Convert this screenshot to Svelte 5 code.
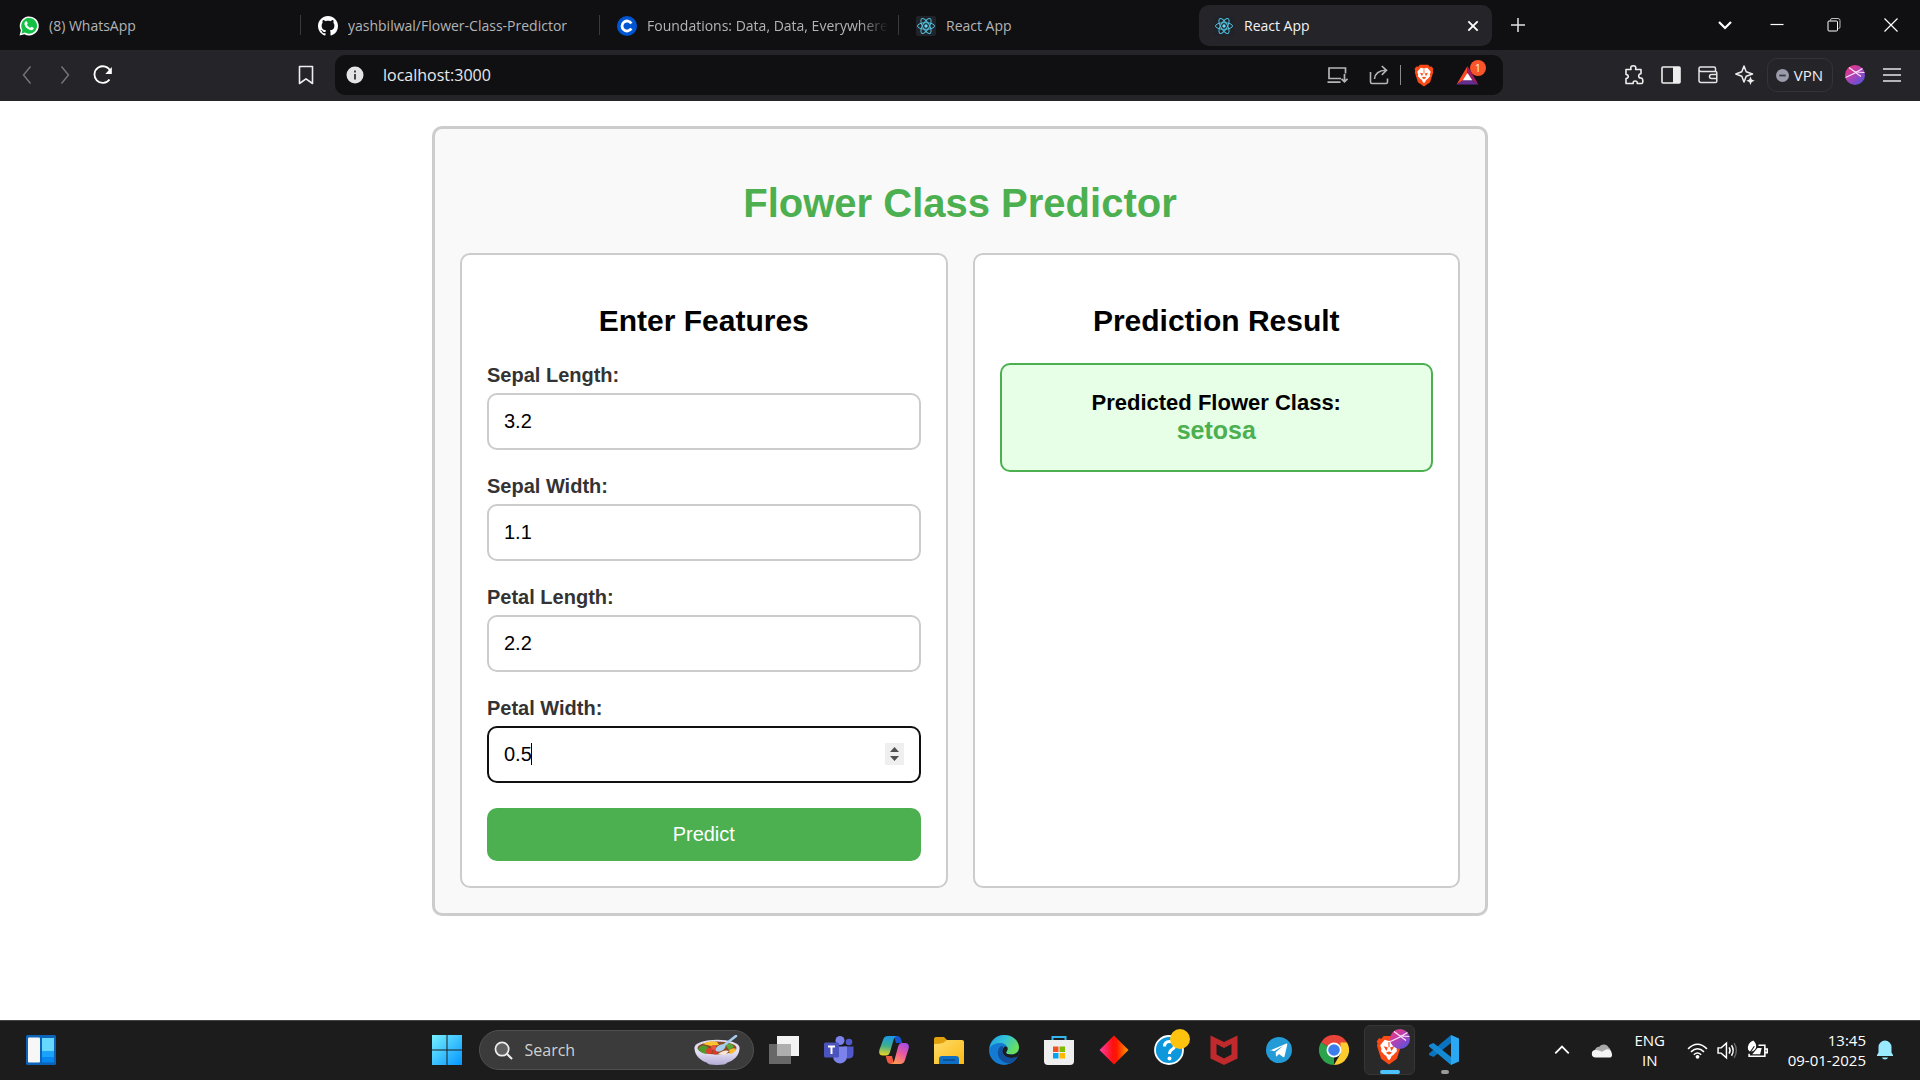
<script lang="ts">
  type Field = { id: string; label: string; value: number };

  const tabs = [
    { title: '(8) WhatsApp', icon: 'whatsapp' },
    { title: 'yashbilwal/Flower-Class-Predictor', icon: 'github' },
    { title: 'Foundations: Data, Data, Everywhere', icon: 'coursera' },
    { title: 'React App', icon: 'react' },
    { title: 'React App', icon: 'react', active: true },
  ];

  let fields: Field[] = $state([
    { id: 'sepal-length', label: 'Sepal Length:', value: 3.2 },
    { id: 'sepal-width', label: 'Sepal Width:', value: 1.1 },
    { id: 'petal-length', label: 'Petal Length:', value: 2.2 },
    { id: 'petal-width', label: 'Petal Width:', value: 0.5 },
  ]);

  const prediction = 'setosa';

  function submit(event: SubmitEvent) {
    event.preventDefault();
  }
</script>

{#snippet brave(cls: string)}
  <svg class={cls} viewBox="0 0 24 28">
    <path d="M7 1h10l2 2.400 2.400-.4L23.500 6l-.8 2 .5 2-3.800 12.200L12 27.500 4.600 22.200.8 10l.5-2-.8-2 2.100-3 2.400.4z" fill="#fb4a16" />
    <path d="M12 5.500l4-1 4.200 5-1.200 3.500 .5 2-3.500 3.600-1.500 1-1 2.400L12 23.500 10.500 22l-1-2.400-1.500-1L4.500 15l.5-2L3.800 9.500 8 4.500z" fill="#fff" />
    <path d="M7 10.500l4 1.200-1.400 3.300zM17 10.500l-4 1.200 1.400 3.300zM9 16.500l3-1 3 1-3 2zM11.500 6.500h1v5h-1z" fill="#fb4a16" />
  </svg>
{/snippet}

{#snippet orb(cls: string)}
  <svg class={cls} viewBox="0 0 20 20">
    <defs>
      <linearGradient id="orb-{cls}" x1="0.1" y1="0" x2="0.9" y2="1">
        <stop offset="0.2" stop-color="#d83a92" />
        <stop offset="0.55" stop-color="#a345bd" />
        <stop offset="1" stop-color="#4a55e0" />
      </linearGradient>
    </defs>
    <circle cx="10" cy="10" r="10" fill="url(#orb-{cls})" />
    <path d="M.5 12.500Q9 9 17.500 3.500M4 2.500L16 11.500M9 6.500Q14 7.500 19.500 7.500" fill="none" stroke="#fbe4fa" stroke-width="1.200" />
  </svg>
{/snippet}

{#snippet favicon(name: string)}
  {#if name === 'whatsapp'}
    <svg class="fav" viewBox="0 0 20 20">
      <path d="M.5 19.500l1.400-5A9.500 9.500 0 1 1 5.500 18.200z" fill="#fff" />
      <path d="M2.500 17.500l.9-3.500A7.900 7.900 0 1 1 6 16.600z" fill="#12c143" />
      <path d="M6.800 5.300c.6-.3 1-.1 1.200.4l.7 1.600c.1.500-.8 1.200-.7 1.500.7 1.500 1.700 2.400 3.200 3 .4.100 1-1.100 1.400-1l1.800.9c.5.300.2 1.200-.1 1.600-1.100 1.300-2.700 1.100-4.300.3C7.800 12.500 6 10.500 5.500 8.500c-.3-1.300.3-2.500 1.300-3.200z" fill="#fff" />
    </svg>
  {:else if name === 'github'}
    <svg class="fav" viewBox="0 0 16 16">
      <path fill="#fff" d="M8 0C3.580 0 0 3.580 0 8c0 3.540 2.290 6.530 5.470 7.590.4.070.55-.17.55-.38 0-.19-.01-.82-.01-1.490-2.010.37-2.530-.49-2.690-.94-.09-.23-.48-.94-.82-1.130-.28-.15-.68-.52-.01-.53.63-.01 1.080.58 1.230.82.72 1.210 1.870.87 2.330.66.07-.52.28-.87.51-1.070-1.780-.2-3.640-.89-3.640-3.950 0-.87.31-1.590.82-2.150-.08-.2-.36-1.020.08-2.120 0 0 .67-.21 2.200.82.64-.18 1.320-.27 2-.27s1.360.09 2 .27c1.530-1.040 2.200-.82 2.200-.82.44 1.100.16 1.920.08 2.120.51.56.82 1.270.82 2.150 0 3.070-1.870 3.750-3.650 3.950.29.25.54.73.54 1.480 0 1.070-.01 1.930-.01 2.200 0 .21.15.46.55.38A8.010 8.010 0 0 0 16 8c0-4.420-3.580-8-8-8z" />
    </svg>
  {:else if name === 'coursera'}
    <svg class="fav" viewBox="0 0 20 20">
      <circle cx="10" cy="10" r="10" fill="#0056d2" />
      <path d="M14.300 7.400A5 5 0 1 0 14.300 12.600" fill="none" stroke="#fff" stroke-width="2.800" />
    </svg>
  {:else}
    <svg class="fav" viewBox="0 0 20 20">
      <rect width="20" height="20" rx="2" fill="#20232a" />
      <g fill="none" stroke="#53c1de" stroke-width="1">
        <ellipse cx="10" cy="10" rx="8.500" ry="3.300" />
        <ellipse cx="10" cy="10" rx="8.500" ry="3.300" transform="rotate(60 10 10)" />
        <ellipse cx="10" cy="10" rx="8.500" ry="3.300" transform="rotate(120 10 10)" />
      </g>
      <circle cx="10" cy="10" r="1.700" fill="#61dafb" />
    </svg>
  {/if}
{/snippet}

<div class="screen">
  <header class="browser">
    <div class="tabstrip">
      <div class="tabs" role="tablist">
        {#each tabs as tab, i}
          <div class="tab" class:active={tab.active} class:divided={i < 3}>
            <button class="tab-main" role="tab" aria-selected={!!tab.active}>
              {@render favicon(tab.icon)}
              <span class="tab-title" class:faded={i === 2}>{tab.title}</span>
            </button>
            {#if tab.active}
              <button class="tab-close" aria-label="Close tab">
                <svg viewBox="0 0 12 12"><path d="M2 2l8 8M10 2l-8 8" stroke="#fff" stroke-width="1.600" /></svg>
              </button>
            {/if}
          </div>
        {/each}
        <button class="new-tab" aria-label="New tab">
          <svg viewBox="0 0 14 14"><path d="M7 0v14M0 7h14" stroke="#e2e2e4" stroke-width="1.500" /></svg>
        </button>
      </div>
      <div class="window-controls">
        <button aria-label="Search tabs"><svg viewBox="0 0 16 16"><path d="M2 5l6 6 6-6" fill="none" stroke="#fff" stroke-width="2.200" /></svg></button>
        <button aria-label="Minimize"><svg viewBox="0 0 16 16"><path d="M1.500 7.500h13" stroke="#fff" stroke-width="1.200" /></svg></button>
        <button aria-label="Restore"><svg viewBox="0 0 16 16"><path d="M4.500 3.500V3a1.500 1.500 0 0 1 1.500-1.500h6A2 2 0 0 1 14 3.500v6.500a1.500 1.500 0 0 1-1.500 1.500" fill="none" stroke="#bbb" /><rect x="2" y="4" width="9.500" height="10" rx="1" fill="none" stroke="#fff" /></svg></button>
        <button aria-label="Close window"><svg viewBox="0 0 16 16"><path d="M1.500 1.500l13 13M14.500 1.500l-13 13" stroke="#fff" stroke-width="1.200" /></svg></button>
      </div>
    </div>

    <div class="toolbar">
      <div class="nav">
        <button aria-label="Back"><svg viewBox="0 0 20 20"><path d="M13.500 1.500L6.500 10l7 8.500" fill="none" stroke="#77767b" stroke-width="1.400" /></svg></button>
        <button aria-label="Forward"><svg viewBox="0 0 20 20"><path d="M6.500 1.500l7 8.500-7 8.500" fill="none" stroke="#77767b" stroke-width="1.400" /></svg></button>
        <button aria-label="Reload"><svg viewBox="0 0 20 20"><path d="M16.500 14.500A8.300 8.300 0 1 1 17.500 6.500" fill="none" stroke="#fff" stroke-width="1.800" /><path d="M18.800 2v7h-6.500z" fill="#fff" /></svg></button>
      </div>
      <button class="bookmark" aria-label="Bookmark"><svg viewBox="0 0 20 20"><path d="M3.500 1.500h13v17L10 13.800l-6.500 4.700z" fill="none" stroke="#eee" stroke-width="1.600" stroke-linejoin="round" /></svg></button>
      <div class="address">
        <button class="site-info" aria-label="Site information"><svg viewBox="0 0 18 18"><circle cx="9" cy="9" r="8.500" fill="#e4e3e8" /><path d="M9 8v5.500M9 4.500v2" stroke="#333" stroke-width="1.800" /></svg></button>
        <input class="url" type="text" aria-label="Address" value="localhost:3000" />
        <button class="act install" aria-label="Install app"><svg viewBox="0 0 22 20"><path d="M15 13.500H3V3h16.500v5.500M1.500 17.200h13M18.500 9v7.500M15.500 13.800l3 3 3-3" fill="none" stroke="#b5b5b8" stroke-width="1.700" /></svg></button>
        <button class="act" aria-label="Share"><svg viewBox="0 0 20 20"><path d="M1.500 7v10q0 1.500 1.500 1.500h14q1.500 0 1.500-1.500v-3.500M5.500 14C6 8.500 9.500 5.500 17 5.300M12.800 1L17.500 5.300l-4.700 4.500" fill="none" stroke="#b5b5b8" stroke-width="1.600" /></svg></button>
        <span class="rule"></span>
        <button class="act brave-btn" aria-label="Brave Shields">{@render brave('brave-small')}</button>
        <button class="act rewards" aria-label="Brave Rewards">
          <svg viewBox="0 0 24 22"><path d="M12 1L.5 20.500 12 13z" fill="#ff4724" /><path d="M12 1l11.500 19.500L12 13z" fill="#9e1f63" /><path d="M.5 20.500h23L12 13z" fill="#662d91" /><path d="M12 8.500l5 7.500H7z" fill="#fff" /></svg>
          <span class="badge">1</span>
        </button>
      </div>
      <div class="extras">
        <button aria-label="Extensions"><svg viewBox="0 0 20 20"><path d="M2 4.500h5C6 1 8 .8 9.300.8s3.300.2 2.300 3.700H17v4.300c-1.800 0-2.300 1-2.300 2.100S15.200 13 17 13c2.500 0 2 5.500 1 5.500h-4.800c.3-2-.7-2.500-2-2.500s-2.300.5-2 2.500H2v-5c2-.3 2.300-1 2.300-2S4 9.700 2 9.500z" fill="none" stroke="#eee" stroke-width="1.600" stroke-linejoin="round" /></svg></button>
        <button aria-label="Side panel"><svg viewBox="0 0 20 20"><rect x="1" y="2" width="18" height="16" rx="1" fill="none" stroke="#eee" stroke-width="1.600" /><path d="M12 2h7v16h-7z" fill="#eee" /></svg></button>
        <button aria-label="Wallet"><svg viewBox="0 0 20 20"><path d="M17.500 6.500V3.500q0-1.500-1.500-1.500H2.500Q1 2 1 3.500v12q0 2 2 2h14.500q1.300 0 1.300-1.300V8q0-1.500-1.300-1.500H3Q1 6.500 1 4.500M19 9.500h-5.500q-2 0-2 2t2 2H19" fill="none" stroke="#e5e5e7" stroke-width="1.500" /></svg></button>
        <button aria-label="Leo AI"><svg viewBox="0 0 20 20"><path d="M9 1l2.200 5.800L17.500 9l-6.300 2.200L9 17l-2.200-5.800L.8 9l6-2.200z" fill="none" stroke="#eee" stroke-width="1.500" stroke-linejoin="round" /><path d="M15.500 11.500l1.200 3 3 1.200-3 1.200-1.200 3-1.200-3-3-1.200 3-1.200z" fill="#eee" /></svg></button>
        <button class="vpn"><svg viewBox="0 0 12 12"><circle cx="6" cy="6" r="6" fill="#9a9bab" /><path d="M3 6h6" stroke="#3a3a42" stroke-width="1.600" /></svg>VPN</button>
        <button aria-label="Profile">{@render orb('orb-bar')}</button>
        <button aria-label="Menu"><svg viewBox="0 0 20 20"><path d="M1 4h18M1 10h18M1 16h18" stroke="#e6e6e8" stroke-width="1.500" /></svg></button>
      </div>
    </div>
  </header>

  <main class="page">
    <div class="container">
      <h1>Flower Class Predictor</h1>
      <div class="columns">
        <section class="card">
          <h2>Enter Features</h2>
          <form onsubmit={submit}>
            {#each fields as field, i (field.id)}
              <div class="field">
                <label for={field.id}>{field.label}</label>
                <div class="control" class:focused={i === 3}>
                  <input id={field.id} type="number" step="0.1" bind:value={field.value} />
                  {#if i === 3}
                    <span class="caret"></span>
                    <span class="spinner">
                      <svg viewBox="0 0 19 22"><path d="M5 9l4.500-5L14 9zM5 13l4.500 5 4.500-5z" fill="#505050" /></svg>
                    </span>
                  {/if}
                </div>
              </div>
            {/each}
            <button class="predict" type="submit">Predict</button>
          </form>
        </section>
        <section class="card">
          <h2>Prediction Result</h2>
          <div class="result">
            <h3>Predicted Flower Class:</h3>
            <p>{prediction}</p>
          </div>
        </section>
      </div>
    </div>
  </main>

  <footer class="taskbar">
    <div class="task-left">
      <button class="widgets" aria-label="Widgets">
        <svg class="ico" viewBox="0 0 30 30"><rect width="30" height="30" rx="1.500" fill="#0b64b8" /><rect x="2" y="2.500" width="12" height="25" rx="1" fill="#f7f7f7" /><path d="M16 3h12v13H16z" fill="#66d7ff" /><path d="M16 16h12v6H16z" fill="#1ba2fa" /><path d="M16 22h12v5.500H16z" fill="#0786ee" /></svg>
      </button>
    </div>

    <div class="task-center">
      <button class="cell" aria-label="Start">
        <svg class="ico" viewBox="0 0 30 30">
          <defs><linearGradient id="win" x1="0" y1="0" x2="1" y2="1"><stop offset="0" stop-color="#75f0ff" /><stop offset="1" stop-color="#0595ff" /></linearGradient></defs>
          <path d="M0 0h14.500v14.500H0zM15.500 0H30v14.500H15.500zM0 15.500h14.500V30H0zM15.500 15.500H30V30H15.500z" fill="url(#win)" />
        </svg>
      </button>
      <label class="search">
        <svg class="lens" viewBox="0 0 20 20"><circle cx="8.500" cy="8.500" r="7" fill="#606060" stroke="#eee" stroke-width="1.800" /><path d="M13.500 13.500l5.500 5.500" stroke="#eee" stroke-width="2.200" /></svg>
        <input type="text" placeholder="Search" aria-label="Search" />
        <svg class="bowl" viewBox="0 0 46 30">
          <defs><linearGradient id="dish" x1="0" y1="0" x2="0" y2="1"><stop offset="0" stop-color="#f4f1ff" /><stop offset="1" stop-color="#b4abd6" /></linearGradient></defs>
          <path d="M.5 13c0 8 7 13 12 14.500Q14 30 23 30t10.500-2.500C39 26 45.500 21 45.500 13z" fill="url(#dish)" />
          <ellipse cx="23" cy="12.500" rx="22.500" ry="7.800" fill="#e0dcf3" />
          <ellipse cx="23" cy="13" rx="19.500" ry="6.500" fill="#8c4a22" />
          <path d="M4 14q3-5 8-3l5 4-5 4q-6-1-8-5z" fill="#4e9b2e" />
          <path d="M9 9q6-4 14-2l2 3-8 1z" fill="#fdc52d" />
          <path d="M31 9q7-2 9 3l-5 3z" fill="#5aa637" />
          <circle cx="15" cy="16" r="3" fill="#e33b2e" /><circle cx="19.500" cy="12.500" r="2.500" fill="#ef5340" /><circle cx="21" cy="17" r="2.500" fill="#d93a2b" />
          <path d="M24 19q6-5 11-3l-4 4z" fill="#fae6d6" /><path d="M35 15q5-3 7-1-1 4-6 5z" fill="#f6bd33" />
          <ellipse cx="26.500" cy="13" rx="5.500" ry="3" fill="#a6cdf0" transform="rotate(-28 26.500 13)" />
          <path d="M29 11L42 1" stroke="#a6cdf0" stroke-width="2.500" stroke-linecap="round" />
        </svg>
      </label>
      <button class="cell" aria-label="Task view">
        <svg class="ico" viewBox="0 0 30 30"><path d="M8 1h22v20H8z" fill="#f3f3f3" /><path d="M0 9h22v20H0z" fill="#686868" /><path d="M8 9h14v12H8z" fill="#aeaeae" /></svg>
      </button>
      <button class="cell" aria-label="Teams">
        <svg class="ico" viewBox="0 0 30 30"><circle cx="16" cy="5.500" r="4.500" fill="#7b83eb" /><circle cx="25" cy="7" r="3.300" fill="#5059c9" /><path d="M20 11.500h9.500v7q0 5-5 5H20z" fill="#5059c9" /><path d="M9 11.500h14v9q0 7.500-7 8-7-.5-7-8z" fill="#7b83eb" /><rect y="7.500" width="15" height="15" rx="1.500" fill="#4b53bc" /><path d="M4 11.500h7M7.500 11.500V19" stroke="#fff" stroke-width="2" /></svg>
      </button>
      <button class="cell" aria-label="Copilot">
        <svg class="ico" viewBox="0 0 30 30">
          <defs>
            <linearGradient id="cpa" x1="0.3" y1="0" x2="0.2" y2="1"><stop offset="0" stop-color="#1a9ae8" /><stop offset="0.5" stop-color="#3fae8c" /><stop offset="1" stop-color="#f0d424" /></linearGradient>
            <linearGradient id="cpb" x1="0.8" y1="0" x2="0.3" y2="1"><stop offset="0" stop-color="#a24be8" /><stop offset="0.5" stop-color="#ee5a9b" /><stop offset="1" stop-color="#ff9a53" /></linearGradient>
          </defs>
          <path d="M15 1h3q3 0 4 3l1.200 4H17z" fill="#1553cf" />
          <path d="M15 29h-3q-3 0-4-3l-1.200-5H13z" fill="#f0583f" />
          <path d="M9 1h9q-2.500.5-3.500 4L11 17q-1 3.500-4 3.500H4q-5 0-3.500-6L4 5q1-4 5-4z" fill="url(#cpa)" />
          <path d="M21 29h-9q2.500-.5 3.500-4L19 12q1-4 4-4h3q5 0 3.500 6L26 25q-1 4-5 4z" fill="url(#cpb)" />
        </svg>
      </button>
      <button class="cell" aria-label="File Explorer">
        <svg class="ico" viewBox="0 0 30 30"><defs><linearGradient id="fold" x1="0" y1="0" x2="1" y2="1"><stop offset="0" stop-color="#ffdc6b" /><stop offset="1" stop-color="#fbb913" /></linearGradient></defs><path d="M0 4q0-2 2-2h8l4 4h14q2 0 2 2v6H0z" fill="#e1a00e" /><path d="M0 9q6 0 9-1l4-3h15q2 0 2 2v22H0z" fill="url(#fold)" /><path d="M5 29v-5q0-3 3-3h14q3 0 3 3v5z" fill="#0f6fc4" /><path d="M9 25h12" stroke="#0a4a8d" stroke-width="1.500" /></svg>
      </button>
      <button class="cell" aria-label="Edge">
        <svg class="ico" viewBox="0 0 30 30">
          <defs><linearGradient id="edg" x1="0" y1="0" x2="1" y2="0.500"><stop offset="0" stop-color="#1d9be0" /><stop offset="0.500" stop-color="#33c3d8" /><stop offset="1" stop-color="#6be05a" /></linearGradient></defs>
          <circle cx="15" cy="15" r="15" fill="#137bd2" />
          <path d="M.5 13C2 5 8 0 15 0c9 0 15 6 15 12.500 0 5-4 7-8 7-3 0-5-1-5-2 0-.7 1.500-1.500 1.500-4 0-3-3-5.500-7-5.500-5 0-9 2-11 5z" fill="url(#edg)" />
          <path d="M12 11c-4 3-4 9-1 13s9 6 13 3c2-1 4-4 4.500-5.500-6 3-14 1-15-5-.3-2 0-4 1-5z" fill="#124f9c" />
          <path d="M17 17.500c0 1 2 2 5 2 4 0 8-2 8-6.500 0 4 0 6-1.500 8.500-6 3-14 1-15-5-.2-2 1-5 3-5 2.500 0 3 3 .5 6z" fill="#1c1c1c" />
        </svg>
      </button>
      <button class="cell" aria-label="Microsoft Store">
        <svg class="ico" viewBox="0 0 30 30"><path d="M8.500 7V2h13v5" fill="none" stroke="#35b6ee" stroke-width="2" /><path d="M0 5h30v21q0 4-4 4H4q-4 0-4-4z" fill="#efefef" /><path d="M9 11.500h5.500V17H9z" fill="#f25022" /><path d="M15.500 11.500H21V17h-5.500z" fill="#7fba00" /><path d="M9 18h5.500v5.500H9z" fill="#00a4ef" /><path d="M15.500 18H21v5.500h-5.500z" fill="#ffb900" /></svg>
      </button>
      <button class="cell" aria-label="Power app">
        <svg class="ico" viewBox="0 0 30 30"><defs><linearGradient id="dia"><stop offset="0" stop-color="#ff3fa8" /><stop offset="0.450" stop-color="#ff1010" /><stop offset="0.600" stop-color="#ff1a00" /><stop offset="1" stop-color="#ff9f00" /></linearGradient></defs><path d="M15 .5L29.500 15 15 29.500.5 15z" fill="url(#dia)" /></svg>
      </button>
      <button class="cell" aria-label="Get Help">
        <svg class="ico over" viewBox="0 0 36 36"><circle cx="15" cy="21" r="14" fill="#0d97dc" stroke="#fff" stroke-width="1.800" /><path d="M10.500 17.500q0-5 5-5t5 4.500q0 2-2.500 3.500-2.500 1.500-2.500 4.500" fill="none" stroke="#fff" stroke-width="3" /><circle cx="15.500" cy="29.500" r="2" fill="#fff" /><circle cx="26" cy="10" r="10" fill="#ffc20e" /></svg>
      </button>
      <button class="cell" aria-label="McAfee">
        <svg class="ico" viewBox="0 0 30 30"><path d="M1.500.5L15 7 28.500.5v23L15 30 1.500 23.500z" fill="#c12a2c" /><path d="M7.500 9L15 13l7.500-4v10.500L15 23.500l-7.500-4z" fill="#1c1c1c" /></svg>
      </button>
      <button class="cell" aria-label="Telegram">
        <svg class="ico" viewBox="0 0 30 30"><circle cx="15" cy="15" r="13" fill="#229bd6" /><path d="M6 15.500L22.500 8.500q1-.3.800 1L20.500 21.500q-.4 1.200-1.500.5l-4-3-2.200 2.200q-.8.600-.9-.5l-.2-3.500 7.500-6.500-9 5.500-4-1.200q-1-.3-.2-.5z" fill="#fff" /></svg>
      </button>
      <button class="cell" aria-label="Chrome">
        <svg class="ico" viewBox="0 0 30 30"><path d="M15 15L2 7.500A15 15 0 0 1 28 7.500z" fill="#e8443a" /><path d="M15 15L2 7.500A15 15 0 0 0 15 30z" fill="#2ba24c" /><path d="M28 7.500A15 15 0 0 1 15 30l6.500-11.200V7.500z" fill="#fccc2e" /><circle cx="15" cy="15" r="7.500" fill="#fff" /><circle cx="15" cy="15" r="5.800" fill="#3b7ded" /></svg>
      </button>
      <button class="cell running" aria-label="Brave">
        {@render brave('brave-task')}
        {@render orb('orb-task')}
        <span class="marker"></span>
      </button>
      <button class="cell" aria-label="Visual Studio Code">
        <svg class="ico" viewBox="0 0 30 30"><path d="M22 0v8L4.500 22 0 20v-1.500z" fill="#0b74c0" /><path d="M22 30v-8L4.500 8 0 10v1.500z" fill="#158ad4" /><path d="M22 0l8 3.500v23L22 30z" fill="#2aa8f2" /></svg>
        <span class="marker idle"></span>
      </button>
    </div>

    <div class="tray">
      <button class="t-chev" aria-label="Show hidden icons"><svg viewBox="0 0 16 16"><path d="M2 11l6-6 6 6" fill="none" stroke="#fff" stroke-width="1.600" /></svg></button>
      <button class="t-cloud" aria-label="OneDrive"><svg viewBox="0 0 20 14"><path d="M3 8a4.500 4.500 0 0 1 4.500-4.500A5 5 0 0 1 16 4q2 1 2 4z" fill="#a8a8a8" /><path d="M4 13.500a3.500 3.500 0 0 1 0-7q2-.3 3 .5l3 1 4-2q4-.5 5 3 1.500 4.500-2.500 4.500z" fill="#f4f4f4" /></svg></button>
      <button class="lang"><span>ENG</span><span>IN</span></button>
      <button class="status" aria-label="Network, volume, battery">
        <svg class="wifi" viewBox="0 0 20 20"><path d="M1 8.500Q10-.5 19 8.500M3.800 11.300q6.200-6 12.400 0M6.500 14q3.500-3.300 7 0" fill="none" stroke="#fff" stroke-width="1.500" /><circle cx="10" cy="16" r="1.800" fill="#fff" /></svg>
        <svg class="vol" viewBox="0 0 20 20"><path d="M1 7.500h3L9 3v14l-5-4.500H1z" fill="none" stroke="#fff" stroke-width="1.400" /><path d="M11.500 7q2 3 0 6M13.800 5q3.200 5 0 10" fill="none" stroke="#fff" stroke-width="1.400" /><path d="M16.300 3q4.200 7 0 14" fill="none" stroke="#666" stroke-width="1.400" /></svg>
        <svg class="batt" viewBox="0 0 20 20"><path d="M11 5h6v10.500H2V13M17.500 8.500H19.300v3.500h-1.800" fill="none" stroke="#fff" stroke-width="1.500" /><path d="M1 9Q0 3 6 .5q3.500 3 2.500 7Q7 11 2.500 11zM10 7.500h4L12.500 13.500H5z" fill="#fff" /><path d="M2.500 12.500L7 6" stroke="#1c1c1c" stroke-width="1" /></svg>
      </button>
      <button class="clock"><span>13:45</span><span>09-01-2025</span></button>
      <button class="t-bell" aria-label="Notifications"><svg viewBox="0 0 18 20"><path d="M1 15l1.500-2.500V7a6.500 6.500 0 0 1 13 0v5.500L17 15v1H1zM6 17.500h6q-.5 2-3 2t-3-2z" fill="#99e9ff" /></svg></button>
    </div>
  </footer>
</div>

<style>
  :global(body) { margin: 0; background: #fff; }

  .screen {
    min-height: 100vh;
    display: flex;
    flex-direction: column;
    font-family: "Open Sans", "Noto Sans", sans-serif;
  }

  button {
    margin: 0;
    padding: 0;
    border: 0;
    background: none;
    color: inherit;
    font: inherit;
  }
  svg { display: block; flex: none; }

  /* Browser frame */
  .tabstrip {
    display: flex;
    justify-content: space-between;
    height: 50px;
    background: #101012;
  }
  .tabs { display: flex; flex: 0 1 1550px; min-width: 0; }
  .tab {
    display: flex;
    align-items: center;
    flex: 0 1 299px;
    min-width: 0;
    margin: 5px 0 4px;
    padding: 0 8px 0 19px;
    box-sizing: border-box;
    color: #b4b4b6;
    position: relative;
  }
  .tab.divided::after {
    content: "";
    position: absolute;
    right: -2px;
    top: 10px;
    width: 1px;
    height: 20px;
    background: #3a3a3d;
  }
  .tab.active {
    flex-basis: 293px;
    margin-left: 3px;
    margin-right: 3px;
    padding: 0 12px 0 15px;
    border-radius: 10px;
    background: #252429;
    color: #f2f2f3;
  }
  .tab-main {
    display: flex;
    align-items: center;
    gap: 10px;
    flex: 1;
    min-width: 0;
    font-size: 14px;
    line-height: 20px;
    text-align: left;
  }
  .fav { width: 20px; height: 20px; }
  .tab-title { overflow: hidden; white-space: nowrap; }
  .tab-title.faded { mask-image: linear-gradient(90deg, #000 88%, transparent); }
  .tab-close svg { width: 14px; height: 14px; }
  .new-tab { width: 46px; display: grid; place-items: center; }
  .new-tab svg { width: 14px; height: 14px; }
  .window-controls { display: flex; padding-right: 1px; }
  .window-controls button { width: 57px; display: grid; place-items: center; }
  .window-controls button:first-child { width: 46px; }
  .window-controls svg { width: 16px; height: 16px; }

  .toolbar {
    display: flex;
    align-items: center;
    height: 51px;
    padding-bottom: 1px;
    box-sizing: border-box;
    background: #252429;
  }
  .nav { display: flex; flex: 0 0 287px; padding-left: 8px; box-sizing: border-box; }
  .nav button { width: 38px; display: grid; place-items: center; }
  .nav svg, .bookmark svg { width: 20px; height: 20px; }
  .bookmark { width: 38px; display: grid; place-items: center; margin-right: 10px; }
  .address {
    flex: 1;
    display: flex;
    align-items: center;
    height: 40px;
    border-radius: 10px;
    background: #101012;
    padding: 0 15px 0 11px;
  }
  .site-info svg { width: 18px; height: 18px; }
  .url {
    flex: 1;
    min-width: 0;
    margin-left: 19px;
    padding: 0;
    border: 0;
    outline: 0;
    background: none;
    color: #e9e9eb;
    font: 16px/24px "Open Sans", "Noto Sans", sans-serif;
  }
  .act { width: 42px; display: grid; place-items: center; position: relative; }
  .act svg { width: 20px; height: 20px; }
  .install svg { width: 22px; }
  .rule { width: 1px; height: 20px; background: #8a8a8c; }
  .brave-btn { width: 47px; }
  .act :global(.brave-small) { width: 20px; height: 23px; }
  .rewards { width: 40px; }
  .rewards svg { width: 23px; height: 21px; }
  .badge {
    position: absolute;
    right: 2px;
    top: -5px;
    width: 16px;
    height: 16px;
    border-radius: 8px;
    background: #fb542b;
    color: #fff;
    font-size: 10px;
    line-height: 16px;
    text-align: center;
  }
  .extras { display: flex; align-items: center; margin: 0 10px 0 113px; }
  .extras button { width: 37px; display: grid; place-items: center; }
  .extras svg { width: 20px; height: 20px; }
  .extras .vpn {
    width: auto;
    display: flex;
    align-items: center;
    gap: 5px;
    margin: 0 3px;
    padding: 0 9px 0 8px;
    height: 34px;
    box-sizing: border-box;
    border: 1px solid #34333a;
    border-radius: 10px;
    color: #f0f0f2;
    font-size: 15px;
  }
  .extras .vpn svg { width: 13px; height: 13px; }

  /* Predictor page */
  .page {
    flex: 1;
    background: #fff;
    font-family: Arial, "Liberation Sans", sans-serif;
    padding: 25px;
  }
  .container {
    max-width: 1000px;
    margin: 0 auto;
    padding: 25px;
    border: 3px solid #ccc;
    border-radius: 10px;
    background: #f9f9f9;
  }
  h1 {
    margin: 26px 0 27px;
    color: #4caf50;
    font-size: 40px;
    line-height: 46px;
    text-align: center;
  }
  .columns { display: flex; gap: 25px; }
  .card {
    flex: 1;
    min-width: 0;
    box-sizing: border-box;
    padding: 25px;
    border: 2px solid #ccc;
    border-radius: 10px;
    background: #fff;
  }
  h2 {
    margin: 23px 0 24px;
    color: #000;
    font-size: 30px;
    line-height: 36px;
    text-align: center;
  }
  form { padding-top: 1px; }
  .field { margin-bottom: 25px; }
  .field label {
    display: block;
    margin-bottom: 6px;
    color: #333;
    font-size: 20px;
    font-weight: 700;
    line-height: 23px;
  }
  .control {
    position: relative;
    box-sizing: border-box;
    height: 57px;
    border: 2px solid #ccc;
    border-radius: 10px;
    background: #fff;
  }
  .control.focused { border-color: #101010; }
  .control input {
    appearance: textfield;
    width: 100%;
    height: 100%;
    box-sizing: border-box;
    padding: 0 15px;
    border: 0;
    outline: 0;
    background: none;
    color: #000;
    font: 20px/23px Arial, "Liberation Sans", sans-serif;
  }
  .caret {
    position: absolute;
    left: 42px;
    top: 15px;
    width: 1px;
    height: 22px;
    background: #000;
  }
  .spinner {
    position: absolute;
    right: 15px;
    top: 15px;
    width: 19px;
    height: 22px;
    background: #efefef;
  }
  .predict {
    display: block;
    width: 100%;
    padding: 15px;
    border-radius: 10px;
    background: #4caf50;
    color: #fff;
    font-size: 20px;
    line-height: 23px;
  }
  .result {
    padding: 25px;
    border: 2px solid #4caf50;
    border-radius: 10px;
    background: #e6ffe6;
    text-align: center;
  }
  .result h3 { margin: 0; color: #000; font-size: 22px; line-height: 26px; }
  .result p { margin: 0; color: #4caf50; font-size: 25px; font-weight: 700; line-height: 29px; }

  /* Taskbar */
  .taskbar {
    display: grid;
    grid-template-columns: 1fr auto 1fr;
    align-items: center;
    height: 60px;
    box-shadow: inset 0 1px #444;
    background: #1c1c1c;
    color: #fff;
  }
  .task-left { padding-left: 26px; }
  .widgets { display: block; }
  .ico { width: 30px; height: 30px; }
  .task-center { display: flex; align-items: center; padding-right: 29px; }
  .cell {
    position: relative;
    width: 55px;
    height: 50px;
    display: grid;
    place-items: center;
  }
  .ico.over { width: 36px; height: 36px; margin: -6px -6px 0 0; }
  .search {
    display: flex;
    align-items: center;
    width: 275px;
    height: 40px;
    margin: 0 3px 0 4px;
    padding: 0 13px 0 14px;
    box-sizing: border-box;
    border: 1px solid #505050;
    border-radius: 20px;
    background: #3b3b3b;
  }
  .lens { width: 19px; height: 19px; }
  .search input {
    flex: 1;
    min-width: 0;
    margin-left: 12px;
    padding: 0;
    border: 0;
    outline: 0;
    background: none;
    font: 16px/24px "Open Sans", "Noto Sans", sans-serif;
  }
  .search input::placeholder { color: #d0d0d0; opacity: 1; }
  .bowl { width: 46px; height: 30px; }
  .running::before {
    content: "";
    position: absolute;
    inset: 0 2px;
    box-sizing: border-box;
    border: 1px solid #363636;
    border-radius: 6px;
    background: #292929;
  }
  .cell :global(.brave-task) { position: relative; width: 26px; height: 30px; }
  .cell :global(.orb-task) { position: absolute; right: 7px; top: 4px; width: 20px; height: 20px; }
  .marker {
    position: absolute;
    left: 18px;
    bottom: 1px;
    width: 20px;
    height: 4px;
    border-radius: 2px;
    background: #4cc2ff;
  }
  .marker.idle { left: 24px; width: 8px; background: #9a9a9a; }

  .tray { display: flex; align-items: center; justify-content: flex-end; padding-right: 26px; }
  .t-chev svg { width: 18px; height: 18px; }
  .t-cloud { margin-left: 20px; }
  .t-cloud svg { width: 22px; height: 15px; }
  .lang, .clock {
    display: flex;
    flex-direction: column;
    font-size: 15px;
    line-height: 20px;
  }
  .lang { width: 48px; margin-left: 13px; align-items: center; }
  .status { display: flex; align-items: center; gap: 9px; margin: 0 20px 0 13px; }
  .status svg { width: 21px; height: 21px; }
  .clock { align-items: flex-end; }
  .t-bell { margin-left: 10px; }
  .t-bell svg { width: 18px; height: 20px; }
</style>
